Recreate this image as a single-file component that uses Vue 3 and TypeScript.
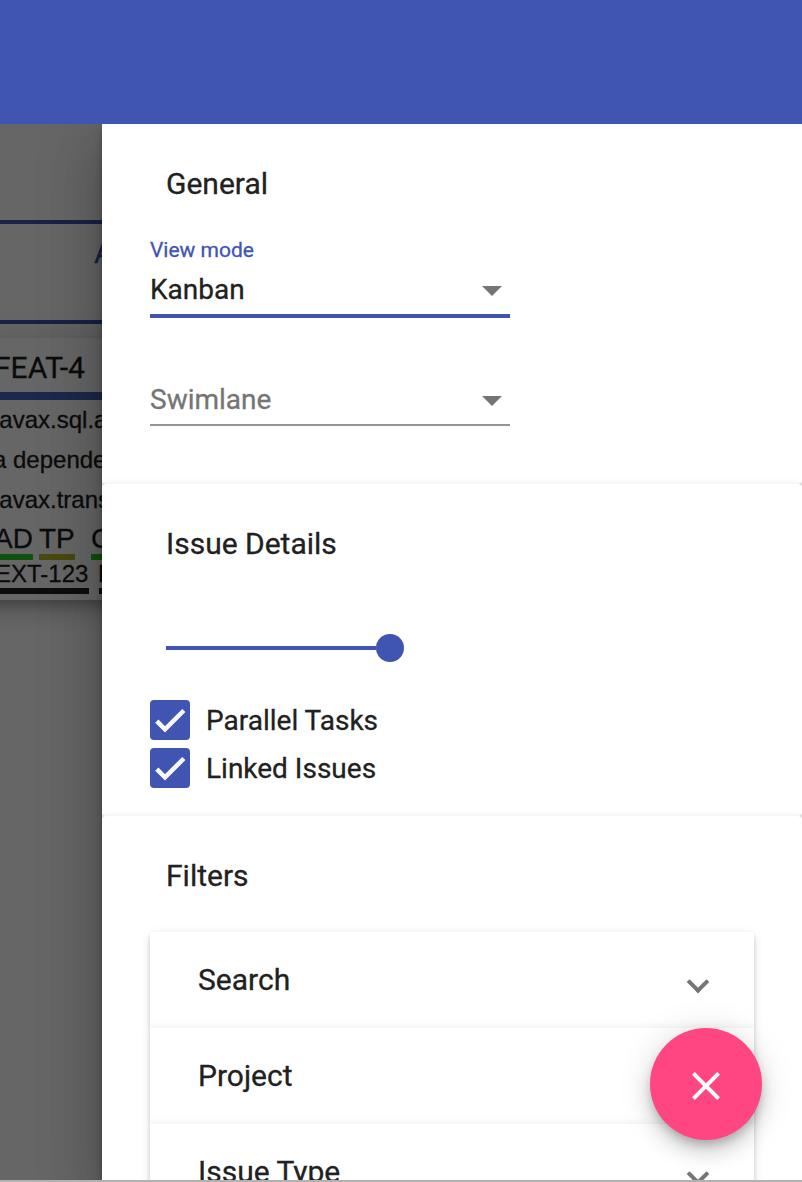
<script setup lang="ts">
import { ref } from 'vue'

interface Field {
  label: string
  value: string
}

interface Toggle {
  label: string
  checked: boolean
}

const fields: Field[] = [
  { label: 'View mode', value: 'Kanban' },
  { label: 'Swimlane', value: '' },
]

const toggles = ref<Toggle[]>([
  { label: 'Parallel Tasks', checked: true },
  { label: 'Linked Issues', checked: true },
])

const filters: string[] = ['Search', 'Project', 'Issue Type']
</script>

<template>
  <div class="page">
    <header class="toolbar"></header>
    <div class="body">
      <main class="board">
        <div class="state"><span>A</span></div>
        <article class="issue">
          <div class="key">FEAT-4</div>
          <p class="line first">javax.sql.a</p>
          <p class="line second">a depende</p>
          <p class="line first">javax.trans</p>
          <div class="tasks">
            <span class="task green one">AD</span>
            <span class="task olive two">TP</span>
            <span class="task green three">C</span>
          </div>
          <div class="links">
            <span class="link">EXT-123</span>
            <span class="link">E</span>
          </div>
        </article>
        <div class="backdrop"></div>
      </main>

      <aside class="drawer">
        <section class="panel general">
          <h2>General</h2>
          <div v-for="f in fields" :key="f.label" class="field" :class="{ active: f.value }">
            <label>{{ f.value ? f.label : '' }}</label>
            <div class="select">
              <span>{{ f.value || f.label }}</span>
              <i class="caret"></i>
            </div>
          </div>
        </section>

        <section class="panel details">
          <h2>Issue Details</h2>
          <div class="slider"><i class="track"></i><i class="thumb"></i></div>
          <label v-for="t in toggles" :key="t.label" class="check" @click="t.checked = !t.checked">
            <span class="box">
              <svg v-if="t.checked" viewBox="0 0 24 24">
                <path d="M4.1 12.7 9 17.6 20.3 6.3" />
              </svg>
            </span>
            <span>{{ t.label }}</span>
          </label>
        </section>

        <section class="panel filters">
          <h2>Filters</h2>
          <div class="accordion">
            <div v-for="name in filters" :key="name" class="item">
              <span>{{ name }}</span>
              <i class="chevron"></i>
            </div>
          </div>
        </section>
      </aside>
    </div>
    <div class="edge"></div>
    <button class="fab" aria-label="Close">
      <svg viewBox="0 0 24 24">
        <path d="M19 6.41 17.59 5 12 10.59 6.41 5 5 6.41 10.59 12 5 17.59 6.41 19 12 13.41 17.59 19 19 17.59 13.41 12z" />
      </svg>
    </button>
  </div>
</template>

<style>
body {
  margin: 0;
  overflow: hidden;
}
</style>

<style scoped>
.page {
  position: relative;
  display: flex;
  flex-direction: column;
  width: 802px;
  height: 1182px;
  overflow: hidden;
  background: #fff;
  font-family: Roboto, "Liberation Sans", sans-serif;
  color: #212121;
  -webkit-text-stroke: 0.3px;
}
.toolbar {
  flex: 0 0 124px;
  background: #4055b2;
}
.body {
  display: flex;
  flex: 1;
  min-height: 0;
  overflow: hidden;
}
.edge {
  flex: 0 0 2px;
  background: #b1b1b1;
}

.board {
  position: relative;
  flex: 0 0 102px;
  box-sizing: border-box;
  padding-top: 96px;
  overflow: hidden;
  white-space: nowrap;
}
.backdrop {
  position: absolute;
  inset: 0;
  background: rgba(0, 0, 0, 0.6);
}
.state {
  box-sizing: border-box;
  height: 104px;
  padding-left: 94px;
  border-top: 4px solid #4055b2;
  border-bottom: 4px solid #4055b2;
  color: #4055b2;
  font-size: 30px;
  line-height: 58px;
}
.issue {
  height: 262px;
  margin: 14px -40px 0;
  padding-left: 40px;
  background: #fff;
  box-shadow: 0 6px 10px -2px rgba(0, 0, 0, 0.2), 0 12px 20px rgba(0, 0, 0, 0.14), 0 2px 36px rgba(0, 0, 0, 0.12);
  color: #1c1c1c;
  font-family: "Liberation Sans", Arial, sans-serif;
  font-size: 24px;
}
.key {
  height: 54px;
  border-bottom: 8px solid #4668bd;
  font-family: Roboto, sans-serif;
  font-size: 30px;
  line-height: 60px;
  text-indent: -6px;
}
.line {
  margin: 0;
  line-height: 40px;
}
.first {
  text-indent: -6px;
}
.second {
  text-indent: -7px;
}
.tasks {
  display: flex;
  height: 40px;
  margin-left: -6px;
}
.task {
  box-sizing: border-box;
  flex: none;
  height: 40px;
  border-bottom: 6px solid;
  font-size: 28px;
  line-height: 38px;
}
.one {
  width: 39px;
}
.two {
  width: 36px;
  margin-left: 6px;
}
.three {
  width: 30px;
  margin-left: 16px;
}
.green {
  border-bottom-color: #22cc26;
}
.olive {
  border-bottom-color: #b6b822;
}
.links {
  display: flex;
  gap: 10px;
  margin-left: -4px;
}
.link {
  box-sizing: border-box;
  flex: none;
  width: 93px;
  height: 34px;
  border-bottom: 6px solid #222;
  line-height: 27px;
  text-indent: -1px;
}

.drawer {
  position: relative;
  flex: 1;
  background: #fff;
  box-shadow: 0 16px 20px -10px rgba(0, 0, 0, 0.2), 0 32px 48px 4px rgba(0, 0, 0, 0.14), 0 12px 60px 10px rgba(0, 0, 0, 0.12);
}
.panel {
  box-sizing: border-box;
  padding: 30px 48px 0;
  border-radius: 4px;
  background: #fff;
  box-shadow: 0 6px 2px -4px rgba(0, 0, 0, 0.2), 0 4px 4px rgba(0, 0, 0, 0.14), 0 2px 10px rgba(0, 0, 0, 0.12);
}
.general {
  height: 360px;
}
.details {
  height: 332px;
}
.filters {
  height: 420px;
}
h2 {
  margin: 0 0 0 16px;
  font-size: 30px;
  font-weight: 400;
  line-height: 60px;
}
.field {
  display: flex;
  flex-direction: column;
  box-sizing: border-box;
  width: 360px;
  height: 110px;
  padding-top: 22px;
}
.field label {
  height: 28px;
  color: #4055b2;
  font-size: 21px;
  line-height: 28px;
}
.select {
  display: flex;
  align-items: center;
  justify-content: space-between;
  box-sizing: border-box;
  height: 52px;
  padding-right: 8px;
  border-bottom: 2px solid #949494;
  color: #757575;
  font-size: 28px;
  line-height: 50px;
}
.select > span {
  padding-top: 2px;
}
.active .select {
  height: 54px;
  border-bottom: 4px solid #4055b2;
}
.active .select > span {
  color: #212121;
}
.caret {
  margin-top: 4px;
  border: 10px solid transparent;
  border-top-color: #757575;
  border-bottom: 0;
}

.slider {
  display: flex;
  align-items: center;
  height: 28px;
  margin: 60px 0 38px 16px;
}
.track {
  width: 210px;
  height: 4px;
  background: #4055b2;
}
.thumb {
  width: 28px;
  height: 28px;
  border-radius: 50%;
  background: #4055b2;
}
.check {
  display: flex;
  gap: 16px;
  height: 40px;
  margin-bottom: 8px;
  font-size: 28px;
  line-height: 42px;
}
.box {
  width: 40px;
  height: 40px;
  border-radius: 4px;
  background: #4055b2;
}
.box svg {
  display: block;
  fill: none;
  stroke: #fafafa;
  stroke-width: 2.7;
}

.accordion {
  margin-top: 26px;
}
.item {
  display: flex;
  align-items: center;
  justify-content: space-between;
  box-sizing: border-box;
  height: 96px;
  padding: 0 48px;
  background: #fff;
  box-shadow: 0 6px 2px -4px rgba(0, 0, 0, 0.2), 0 4px 4px rgba(0, 0, 0, 0.14), 0 2px 10px rgba(0, 0, 0, 0.12);
  font-size: 30px;
  line-height: 60px;
}
.item:first-child {
  border-radius: 4px 4px 0 0;
}
.chevron {
  width: 12px;
  height: 12px;
  margin-top: 4px;
  border: solid #757575;
  border-width: 0 4px 4px 0;
  transform: rotate(45deg);
}

.fab {
  position: absolute;
  right: 40px;
  bottom: 42px;
  width: 112px;
  height: 112px;
  padding: 4px 0 0;
  border: 0;
  border-radius: 50%;
  background: #ff4582;
  box-shadow: 0 6px 10px -2px rgba(0, 0, 0, 0.2), 0 12px 20px rgba(0, 0, 0, 0.14), 0 2px 36px rgba(0, 0, 0, 0.12);
}
.fab svg {
  display: block;
  width: 48px;
  height: 48px;
  margin: 0 auto;
  fill: #fff;
}
</style>
